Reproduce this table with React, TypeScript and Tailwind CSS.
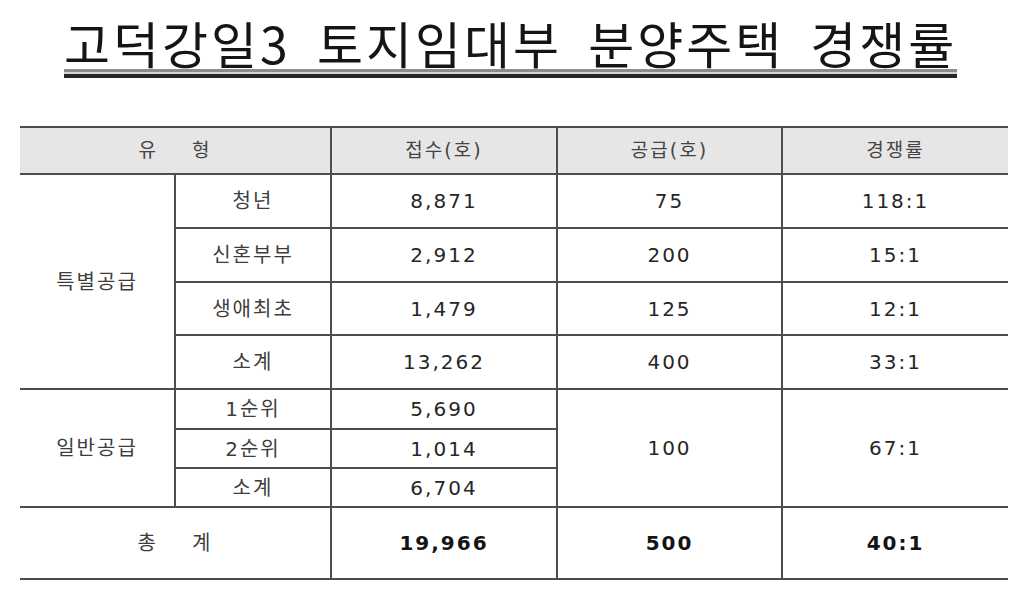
import React from "react"

const font = "font-['DejaVu_Sans','Noto_Sans_CJK_KR',sans-serif]"
const td = "border-2 border-[#4d4d4d] text-center align-middle p-0"
const label = "text-[#3d3d3d] text-[20px]"

type Row = { label: string; apply: string; supply?: string; rate?: string }

const special: Row[] = [
  { label: "청년", apply: "8,871", supply: "75", rate: "118:1" },
  { label: "신혼부부", apply: "2,912", supply: "200", rate: "15:1" },
  { label: "생애최초", apply: "1,479", supply: "125", rate: "12:1" },
  { label: "소계", apply: "13,262", supply: "400", rate: "33:1" },
]

const general: Row[] = [
  { label: "1순위", apply: "5,690" },
  { label: "2순위", apply: "1,014" },
  { label: "소계", apply: "6,704" },
]

const specialHeights = ["h-[54px]", "h-[54px]", "h-[53px]", "h-[54px]"]
const generalHeights = ["h-[40px]", "h-[39px]", "h-[39px]"]

export default function App() {
  return (
    <div className={`w-[1036px] h-[602px] bg-white text-[#262626] ${font}`}>
      <div className="pt-[15px] pl-[64px]">
        <div className="inline-block">
          <h1 className="font-['Noto_Sans_CJK_KR',sans-serif] text-[50px] leading-[54px] tracking-[3px] [word-spacing:12px] text-[#151515] font-normal whitespace-nowrap">
            고덕강일3 토지임대부 분양주택 경쟁률
          </h1>
          <div className="h-[3px] bg-[#8c8c8c]" />
          <div className="h-[2px] bg-[#d4d4d4]" />
          <div className="h-[4px] bg-[#262626]" />
        </div>
      </div>

      <table className="ml-[20px] mt-[48px] w-[988px] table-fixed border-collapse text-[20px] tracking-[2px]">
        <colgroup>
          <col className="w-[155px]" />
          <col className="w-[156px]" />
          <col className="w-[226px]" />
          <col className="w-[225px]" />
          <col className="w-[226px]" />
        </colgroup>
        <tbody>
          <tr className="h-[47px] bg-[#e6e6e6] text-[#444] text-[19px]">
            <td colSpan={2} className={`${td} border-l-0`}>
              <span className="inline-flex gap-[34px]">
                <span>유</span>
                <span>형</span>
              </span>
            </td>
            <td className={td}>접수(호)</td>
            <td className={td}>공급(호)</td>
            <td className={`${td} border-r-0`}>경쟁률</td>
          </tr>

          {special.map((r, i) => (
            <tr key={r.label + i} className={specialHeights[i]}>
              {i === 0 && (
                <td rowSpan={4} className={`${td} border-l-0 ${label}`}>
                  특별공급
                </td>
              )}
              <td className={`${td} ${label}`}>{r.label}</td>
              <td className={td}>{r.apply}</td>
              <td className={td}>{r.supply}</td>
              <td className={`${td} border-r-0`}>{r.rate}</td>
            </tr>
          ))}

          {general.map((r, i) => (
            <tr key={"g" + i} className={generalHeights[i]}>
              {i === 0 && (
                <td rowSpan={3} className={`${td} border-l-0 ${label}`}>
                  일반공급
                </td>
              )}
              <td className={`${td} ${label}`}>{r.label}</td>
              <td className={td}>{r.apply}</td>
              {i === 0 && (
                <>
                  <td rowSpan={3} className={td}>100</td>
                  <td rowSpan={3} className={`${td} border-r-0`}>67:1</td>
                </>
              )}
            </tr>
          ))}

          <tr className="h-[72px]">
            <td colSpan={2} className={`${td} border-l-0 ${label}`}>
              <span className="inline-flex gap-[34px]">
                <span>총</span>
                <span>계</span>
              </span>
            </td>
            <td className={`${td} font-bold text-[#141414]`}>19,966</td>
            <td className={`${td} font-bold text-[#141414]`}>500</td>
            <td className={`${td} border-r-0 font-bold text-[#141414]`}>40:1</td>
          </tr>
        </tbody>
      </table>
    </div>
  )
}
